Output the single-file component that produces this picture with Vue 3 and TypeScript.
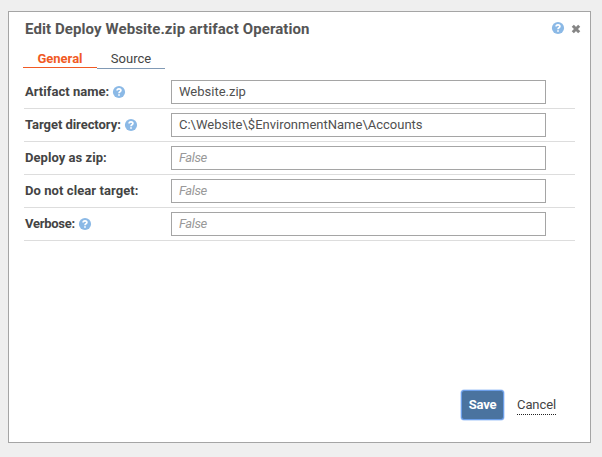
<script setup lang="ts">
interface Field {
  label: string
  tracking: number
  help: boolean
  value: string
}

const fields: Field[] = [
  { label: 'Artifact name:', tracking: 0.03, help: true, value: 'Website.zip' },
  { label: 'Target directory:', tracking: -0.05, help: true, value: 'C:\\Website\\$EnvironmentName\\Accounts' },
  { label: 'Deploy as zip:', tracking: 0.04, help: false, value: '' },
  { label: 'Do not clear target:', tracking: 0.08, help: false, value: '' },
  { label: 'Verbose:', tracking: -0.28, help: true, value: '' },
]
</script>

<template>
  <main class="page">
    <section class="dialog">
      <header class="head">
        <h1 class="title">Edit Deploy Website.zip artifact Operation</h1>
        <svg class="help" viewBox="0 0 12 12">
          <circle cx="6" cy="6" r="6.1" />
          <path d="M4.1 4.5C4.1 2.2 7.9 2.2 7.9 4.5C7.9 5.9 6 5.6 6 7.2M6 8.2V9.7" />
        </svg>
        <svg class="close" viewBox="0 0 10 10"><path d="M1.8 1.8L8.2 8.2M8.2 1.8L1.8 8.2" /></svg>
      </header>
      <nav class="tabs">
        <a class="tab active">General</a>
        <a class="tab">Source</a>
      </nav>
      <form class="form" @submit.prevent>
        <div v-for="f in fields" :key="f.label" class="row">
          <label class="label">
            <span :style="{ letterSpacing: f.tracking + 'px' }">{{ f.label }}</span>
            <svg v-if="f.help" class="help" viewBox="0 0 12 12">
              <circle cx="6" cy="6" r="6.1" />
              <path d="M4.1 4.5C4.1 2.2 7.9 2.2 7.9 4.5C7.9 5.9 6 5.6 6 7.2M6 8.2V9.7" />
            </svg>
          </label>
          <input class="input" type="text" :value="f.value" placeholder="False" />
        </div>
      </form>
      <footer class="foot">
        <button class="save" type="button">Save</button>
        <a class="cancel">Cancel</a>
      </footer>
    </section>
  </main>
</template>

<style>
body {
  background: #efefef;
}
</style>

<style scoped>
.page {
  box-sizing: border-box;
  height: 457px;
  padding: 11px 11px 14px 8px;
  font: 13px/16px Roboto, "Liberation Sans", sans-serif;
  color: #444;
}
.dialog {
  box-sizing: border-box;
  display: flex;
  flex-direction: column;
  height: 432px;
  padding: 0 15px 22px;
  background: #fff;
  border: 1px solid #a5a5a5;
}
.head {
  display: flex;
  align-items: center;
  height: 34px;
  margin-right: -6px;
}
.title {
  flex: 1;
  margin: 0 0 1px 1px;
  font-size: 15px;
  line-height: 20px;
  font-weight: 700;
  letter-spacing: 0.09px;
  color: #555;
}
.help {
  flex: none;
  width: 12px;
  height: 12px;
  overflow: visible;
}
.help circle {
  fill: #8bb9e6;
}
.help path {
  fill: none;
  stroke: #fff;
  stroke-width: 1.7;
}
.head .help {
  margin-bottom: 2px;
}
.close {
  width: 10px;
  height: 10px;
  margin-left: 7px;
}
.close path {
  stroke: #858585;
  stroke-width: 3;
}
.tabs {
  display: flex;
  align-items: flex-start;
  height: 30px;
  margin-left: -1px;
}
.tab {
  box-sizing: border-box;
  width: 68px;
  height: 23px;
  padding-top: 5px;
  border-bottom: 1px solid #819ab5;
  text-align: center;
}
.tab.active {
  width: 74px;
  height: 22px;
  border-color: #f15a24;
  color: #f15a24;
  font-weight: 700;
}
.row {
  box-sizing: border-box;
  display: flex;
  align-items: center;
  height: 33px;
  border-bottom: 1px solid #ddd;
}
.label {
  box-sizing: border-box;
  display: flex;
  align-items: center;
  gap: 4px;
  width: 147px;
  padding-left: 1px;
  font-weight: 700;
  white-space: nowrap;
}
.input {
  box-sizing: border-box;
  width: 375px;
  height: 24px;
  margin: 0;
  padding: 0 7px 1px;
  border: 1px solid #a5a5a5;
  border-radius: 0;
  background: #fff;
  font: inherit;
  color: #505050;
  outline: none;
}
.input::placeholder {
  color: #999;
  font-style: italic;
  letter-spacing: -0.4px;
  opacity: 1;
}
.foot {
  display: flex;
  align-items: center;
  gap: 13px;
  margin-top: auto;
  margin-left: auto;
  padding-right: 19px;
}
.save {
  box-sizing: border-box;
  width: 43px;
  height: 30px;
  padding: 0;
  border: 1px solid #6c9fea;
  border-radius: 3px;
  background: #4a739f;
  box-shadow: 0 0 0 0.5px #a4c5f8;
  font: inherit;
  font-weight: 700;
  letter-spacing: -0.2px;
  color: #fff;
}
.cancel {
  height: 17px;
  padding-top: 1px;
  border-bottom: 1px dotted #222;
  letter-spacing: -0.1px;
}
</style>
